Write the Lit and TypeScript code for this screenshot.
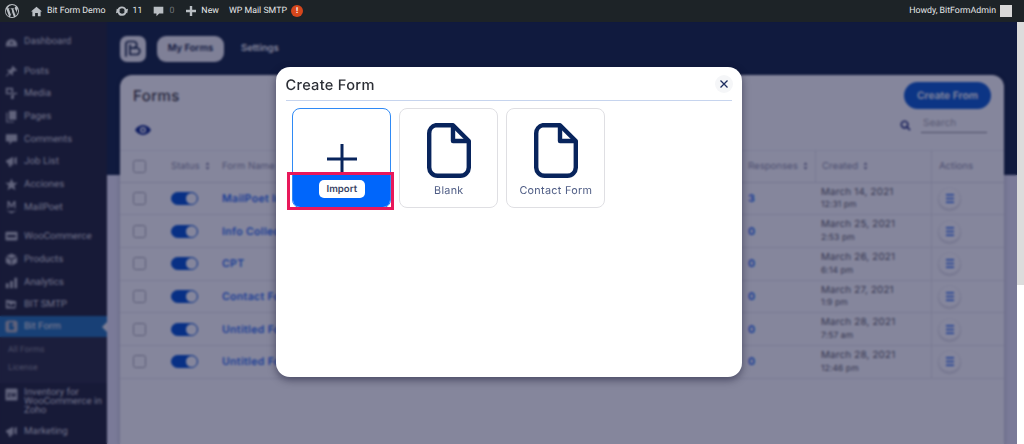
import { LitElement, html, css, svg } from 'lit';
import { customElement } from 'lit/decorators.js';

const icons: Record<string, unknown> = {
  dash: svg`<path fill-rule="evenodd" d="M1 12a7 7 0 0 1 14 0v2H1zM8 7l-1.500 4h3z"/>`,
  pin: svg`<path d="M9.500 1l5.500 5.500-1.500 1-1.500-.5-2.500 2.500.5 2.500-1 1L6 10l-4 4-1-.5 4-4.500-2.500-2.500 1-1 2.500.5L8.500 3.500 8.500 2z"/>`,
  media: svg`<path fill-rule="evenodd" d="M1 1h9v8H1zM3 3v4h5V3zM7 10h2V7h6v2h-4v4a2 2 0 1 1-2-2H7zM11 8"/>`,
  pages: svg`<path d="M5 1h9v11H5zM3 3v11h8v1.500H1.500V3z"/>`,
  comment: svg`<path d="M2 1.500h12a1 1 0 0 1 1 1v7a1 1 0 0 1-1 1H9l-3.500 4V10.500H2a1 1 0 0 1-1-1v-7a1 1 0 0 1 1-1z"/>`,
  job: svg`<path d="M1 7l9-5v11L7 11.500l1 3H5l-1-4-2-1zM11.500 4l3-2v10l-3-2z"/>`,
  star: svg`<path d="M8 .5l2.200 5.200h5.500l-4.200 3.600 1.400 5.700L8 12l-4.900 3 1.400-5.700L.3 5.700h5.500z"/>`,
  mail: svg`<path d="M3 0h2.200L8 5l2.800-5H13v9h-1.800V3.500L8.500 8h-1L4.800 3.500V9H3zM1 11.500c4 1.500 10 1.500 14 0l-6.500 3.500h-1z"/>`,
  woo: svg`<path fill-rule="evenodd" d="M2 2h12a1.500 1.500 0 0 1 1.500 1.500v8A1.500 1.500 0 0 1 14 13H2a1.500 1.500 0 0 1-1.500-1.500v-8A1.500 1.500 0 0 1 2 2zM3 6v3h10V6z"/>`,
  box: svg`<path d="M8 .5l6.500 3.200L8 7 1.500 3.700zM1 5l6.500 3.300V15.500L1 12zM15 5v7l-6.500 3.500V8.300z"/>`,
  chart: svg`<path d="M1 9h3.500v6H1zM6.200 6h3.500v9H6.200zM11.500 2H15v13h-3.500z"/>`,
  smtp: svg`<path d="M1 2l13 2-1 1.500-6 3.500L3 5v5l9 1V6l2-1-1 8H1z"/>`,
  bit: svg`<path fill-rule="evenodd" d="M4 .5h8A3.500 3.500 0 0 1 15.500 4v8a3.500 3.500 0 0 1-3.500 3.500H4A3.500 3.500 0 0 1 .5 12V4A3.500 3.500 0 0 1 4 .5zM5 3v9h6V7.500H8V6h2V3z"/>`,
  zoho: svg`<path fill-rule="evenodd" d="M2 .5h12A1.500 1.500 0 0 1 15.500 2v12a1.500 1.500 0 0 1-1.500 1.500H2A1.500 1.500 0 0 1 .5 14V2A1.500 1.500 0 0 1 2 .5zM3 6v1.200h2L3 10v1h3.500V9.800H4.500l2-2.800V6zM7.500 6l1 5h1l1-3 1 3h1l1-5h-1l-.6 3-1-3h-.8l-1 3-.6-3z"/>`,
  horn: svg`<path d="M1 7l9-5v11L7 11.500l1 3H5l-1-4-2-1zM11.500 4l3-2v10l-3-2z"/>`,
};

type MenuItem = { label: string; icon: string; cls?: string };

const menu: MenuItem[] = [
  { label: 'Dashboard', icon: 'dash', cls: 'gap' },
  { label: 'Posts', icon: 'pin' },
  { label: 'Media', icon: 'media' },
  { label: 'Pages', icon: 'pages' },
  { label: 'Comments', icon: 'comment' },
  { label: 'Job List', icon: 'job' },
  { label: 'Acciones', icon: 'star' },
  { label: 'MailPoet', icon: 'mail', cls: 'gap' },
  { label: 'WooCommerce', icon: 'woo' },
  { label: 'Products', icon: 'box' },
  { label: 'Analytics', icon: 'chart' },
  { label: 'BIT SMTP', icon: 'smtp' },
];

const rows = [
  ['MailPoet Integration', '3', 'March 14, 2021', '12:31 pm'],
  ['Info Collection', '0', 'March 25, 2021', '2:53 pm'],
  ['CPT', '0', 'March 26, 2021', '6:14 pm'],
  ['Contact Form', '0', 'March 27, 2021', '1:9 pm'],
  ['Untitled Form', '0', 'March 28, 2021', '7:57 am'],
  ['Untitled Form', '0', 'March 28, 2021', '12:46 pm'],
];

const fileIcon = html`<svg class="file" viewBox="0 0 44 55" fill="none" stroke="#08245c" stroke-width="4.400" stroke-linejoin="round">
  <path d="M9 2.200h17L41.800 18v26a8.500 8.500 0 0 1-8.500 8.800H10.700A8.500 8.500 0 0 1 2.200 44V10.700A8.500 8.500 0 0 1 9 2.200z"/>
  <path d="M26 2.200V18h15.800"/>
</svg>`;

const sort = html`<svg class="sort" viewBox="0 0 6 9"><path d="M3 0l2.400 3.400H.6zM3 9L.6 5.600h4.800z"/></svg>`;

@customElement('app-root')
export class AppRoot extends LitElement {
  static styles = css`
    :host {
      display: block;
      width: 1024px;
      height: 444px;
      overflow: hidden;
      font-family: 'Inter', 'Liberation Sans', sans-serif;
      text-rendering: geometricPrecision;
    }
    .page { position: relative; width: 1024px; height: 444px; background: #f1f1f1; display: flex; flex-direction: column; overflow: hidden; }
    .adminbar {
      position: relative; z-index: 3;
      height: 22px; flex: none; background: #1d2327; color: #e4e6e8;
      display: flex; align-items: center; padding: 0 12px 0 5px;
      font: 8.800px Roboto, 'Liberation Sans', sans-serif;
    }
    .adminbar svg { fill: #b9bec3; display: block; }
    .ab { display: flex; align-items: center; gap: 5px; }
    .ab.site { margin-left: 12px; }
    .ab.upd { margin-left: 10px; }
    .ab.com { margin-left: 11px; }
    .ab.new { margin-left: 12px; }
    .ab.smtp { margin-left: 10px; gap: 4px; }
    .muted { color: #6d7276; }
    .badge { width: 12px; height: 12px; border-radius: 50%; background: #d5461c; color: #fff; font-size: 8px; font-weight: 700; text-align: center; line-height: 12px; }
    .spacer { flex: 1; }
    .avatar { width: 12px; height: 12px; background: #d8d8d8; margin-left: 4px; }

    .body { flex: 1; display: flex; min-height: 0; }
    .sidebar { width: 107px; flex: none; background: #1f2332; padding-top: 8px; font: 9.800px Roboto, 'Liberation Sans', sans-serif; color: #d0d1d6; }
    .mi { height: 22.700px; display: flex; align-items: center; padding-left: 5px; gap: 6px; }
    .mi svg { width: 13px; height: 13px; fill: #b4b6bc; flex: none; }
    .mi.gap { margin-bottom: 7px; }
    .mi.active { background: #2271b1; color: #e8e8e8; position: relative; height: 21px; }
    .mi.active::after {
      content: ''; position: absolute; right: 0; top: 6px;
      border: 5px solid transparent; border-right-color: #f1f1f1; border-left: 0;
    }
    .sub { height: 46px; box-sizing: border-box; background: #282b3c; padding: 4px 0 0 8px; font-size: 8.600px; color: #8c8f94; }
    .sub div { height: 18px; display: flex; align-items: center; }
    .mi.tall { height: 36.500px; box-sizing: border-box; align-items: flex-start; padding-top: 5px; line-height: 9px; }

    .content {
      flex: 1; min-width: 0; padding: 0 13px;
      background: linear-gradient(#11233f 153px, #e8e7f6 153px);
    }
    .nav { height: 53px; display: flex; align-items: center; }
    .logo { width: 26px; height: 26px; background: #f2f2f4; border-radius: 7px; display: flex; align-items: center; justify-content: center; margin-top: 1px; }
    .logo svg { width: 18px; height: 18px; }
    .tab { font-weight: 600; font-size: 9.500px; color: #fff; }
    .tab.on { margin-left: 11px; width: 67px; height: 26px; border-radius: 9px; background: #f2f2f4; color: #11233f; display: flex; align-items: center; justify-content: center; }
    .tab.off { margin-left: 17px; }

    .card { background: #fff; border-radius: 12px 12px 0 0; height: 369px; box-shadow: 0 0 4px rgba(0,0,20,.25); }
    .top { height: 75px; display: flex; position: relative; padding: 0 13px; }
    .title { font-size: 15px; font-weight: 500; color: #3a3a3a; padding-top: 11px; letter-spacing: .4px; }
    .eye { position: absolute; left: 15px; top: 49px; width: 16px; height: 12px; }
    .create { width: 87px; height: 27px; margin: 7px 0 0 auto; border-radius: 14px; background: #0a5ad0; color: #fff; font-size: 10.300px; font-weight: 600; display: flex; align-items: center; justify-content: center; box-sizing: border-box; }
    .search { position: absolute; right: 17px; top: 42px; display: flex; align-items: center; gap: 10px; font-size: 10px; color: #a8a8ae; }
    .search svg { width: 11px; height: 11px; }
    .search span { width: 66px; height: 16px; box-sizing: border-box; padding: 0 0 0 2px; border-bottom: 1px solid #8a8a92; line-height: 13px; }

    .grid { display: grid; grid-template-columns: 41px 55px 526px 73px 116px 73px; }
    .hd, .cell { display: flex; align-items: center; box-sizing: border-box; }
    .hd { height: 32.600px; font-size: 9.600px; color: #8f92a8; border-top: 1px solid #eceef2; border-bottom: 1px solid #e0e1e8; gap: 5px; }
    .cell { height: 32.700px; border-bottom: 1px solid #e8e8ee; }
    .pad { padding-left: 6px; }
    .pad10 { padding-left: 10px; }
    .pad7 { padding-left: 7px; }
    .sort { width: 5px; height: 8px; fill: #7e81a0; }
    .sep { border-left: 1px solid #e4e4ea; }
    .check { width: 13px; height: 13px; border: 1px solid #a9a9b2; border-radius: 2.500px; margin-left: 13px; box-sizing: border-box; }
    .toggle { width: 27px; height: 13px; border-radius: 7px; background: #0050d0; position: relative; border: 1px solid #0050d0; box-sizing: border-box; }
    .toggle::after { content: ''; position: absolute; right: 0; top: 0; width: 11px; height: 11px; border-radius: 50%; background: #fff; }
    .name { font-size: 10.500px; font-weight: 600; color: #2a6cf0; white-space: nowrap; letter-spacing: .35px; }
    .num { font-size: 10.500px; font-weight: 700; color: #2a6cf0; }
    .date { display: flex; flex-direction: column; gap: 4.500px; color: #5e5e66; font-size: 9.800px; line-height: 9px; letter-spacing: .2px; }
    .date small { font-size: 8.500px; line-height: 8px; letter-spacing: .1px; }
    .act { width: 21px; height: 21px; border-radius: 50%; background: #fff; box-shadow: 0 1px 3px rgba(0,0,50,.25); display: flex; align-items: center; justify-content: center; margin-left: 7px; }
    .act svg { width: 8px; height: 9px; fill: #2a6cf0; }

    .overlay {
      position: absolute; top: 22px; left: 0; right: 7px; bottom: 0; z-index: 2;
      background: rgba(16, 18, 60, .51);
      backdrop-filter: blur(1.200px);
      display: flex; justify-content: center; padding-top: 45px; box-sizing: border-box;
    }
    .modal {
      width: 466px; height: 310px; background: #fff; border-radius: 14px;
      box-shadow: 0 3px 8px rgba(0,0,30,.45); padding: 0 10px 0 10px; box-sizing: border-box;
    }
    .mhead { height: 33px; display: flex; align-items: center; justify-content: space-between; border-bottom: 1px solid #c6d4ee; }
    .mtitle { font-size: 14.600px; font-weight: 500; color: #2c2f36; letter-spacing: .28px; padding-top: 2px; }
    .close { width: 18px; height: 18px; background: #f5f6f8; border-radius: 50%; display: flex; align-items: center; justify-content: center; margin-right: -1px; }
    .close svg { width: 8px; height: 8px; stroke: #1c2c5e; stroke-width: 1.300; fill: none; }
    .opts { display: flex; gap: 8px; padding: 6.500px 0 0 6.800px; }
    .opt {
      width: 99px; height: 100px; border: 1px solid #dfdfe3; border-radius: 8px; box-sizing: border-box;
      display: flex; flex-direction: column; align-items: center; padding-top: 14px; position: relative;
      font-size: 10.800px; color: #4f5d85; letter-spacing: .3px;
    }
    .opt.sel { border-color: #2f8af5; }
    .file { width: 44px; height: 55px; display: block; margin-bottom: 6px; }
    .plus { width: 30px; height: 30px; margin-top: 21px; display: block; }
    .band {
      position: absolute; left: 0; right: 0; bottom: 0; height: 35px; background: #0066fb;
      border-radius: 0 0 7px 7px; display: flex; align-items: center; justify-content: center;
    }
    .imp { width: 46px; height: 18px; background: #fff; border-radius: 5px; color: #3a4464; font-size: 9.600px; font-weight: 600; display: flex; align-items: center; justify-content: center; letter-spacing: 0; }
    .mark { position: absolute; left: -6px; right: -3.500px; bottom: -3.500px; height: 38.300px; box-sizing: border-box; border: 3px solid #e8185a; }

    .scroll { width: 7px; flex: none; background: #dcdcdc; height: 263px; }
    .scrollwrap { width: 7px; flex: none; background: #fff; }
  `;

  private icon(name: string) {
    return html`<svg viewBox="0 0 16 16">${icons[name]}</svg>`;
  }

  render() {
    return html`<div class="page">
      <div class="adminbar">
        <svg width="14" height="14" viewBox="0 0 20 20"><path fill-rule="evenodd" d="M10 0a10 10 0 1 0 0 20 10 10 0 0 0 0-20zm0 1.400a8.600 8.600 0 0 1 5.900 2.300c-1.200 0-2 1-2 2.100 0 1 .6 1.800 1.200 2.800.5.8 1 1.900 1 3.400l-1.300 4.200-3-9.400.9-.1c.5 0 .4-.8-.1-.7 0 0-1.300.1-2.200.1-.8 0-2.100-.1-2.100-.1-.5 0-.6.700-.1.700l.8.1 1.300 3.500-1.800 5.400-3-8.900.9-.1c.5 0 .4-.8-.1-.7 0 0-1.300.1-2.200.1h-.5A8.600 8.600 0 0 1 10 1.400zM1.900 7.100L5.800 18A8.600 8.600 0 0 1 1.900 7.100zM10 11l2.600 7.200a8.600 8.600 0 0 1-5.300.1zm7.600-5.100a8.600 8.600 0 0 1-3 11.400l2.600-7.600c.5-1.200.6-2.100.6-3z"/></svg>
        <div class="ab site">
          <svg width="11" height="11" viewBox="0 0 16 16"><path d="M8 1l8 7h-2v7h-4v-5H6v5H2V8H0z"/></svg>
          <span>Bit Form Demo</span>
        </div>
        <div class="ab upd">
          <svg width="12" height="12" viewBox="0 0 16 16"><path d="M8 2a6 6 0 0 1 5.600 3.800L16 5l-1 6-5-3 1.800-.8A4 4 0 0 0 4.200 7H1.900A6 6 0 0 1 8 2zM0 11l1-6 5 3-1.800.8A4 4 0 0 0 11.800 9h2.300A6 6 0 0 1 2.400 10.200z"/></svg>
          <span>11</span>
        </div>
        <div class="ab com">
          <svg width="11" height="11" viewBox="0 0 16 16"><path d="M1 1h14v10H9l-4 4v-4H1z"/></svg>
          <span class="muted">0</span>
        </div>
        <div class="ab new">
          <svg width="10" height="10" viewBox="0 0 10 10"><path d="M3.800 0h2.400v3.800H10v2.400H6.200V10H3.800V6.200H0V3.800h3.800z"/></svg>
          <span>New</span>
        </div>
        <div class="ab smtp"><span>WP Mail SMTP</span><span class="badge">!</span></div>
        <div class="spacer"></div>
        <span>Howdy, BitFormAdmin</span>
        <div class="avatar"></div>
      </div>

      <div class="body">
        <div class="sidebar">
          ${menu.map(
            (m) => html`<div class="mi ${m.cls ?? ''}">${this.icon(m.icon)}<span>${m.label}</span></div>`,
          )}
          <div class="mi active">${this.icon('bit')}<span>Bit Form</span></div>
          <div class="sub"><div>All Forms</div><div>License</div></div>
          <div class="mi tall">${this.icon('zoho')}<span>Inventory for WooCommerce in Zoho</span></div>
          <div class="mi">${this.icon('horn')}<span>Marketing</span></div>
        </div>

        <div class="content">
          <div class="nav">
            <div class="logo">
              <svg viewBox="0 0 18 18" fill="none" stroke="#11233f" stroke-width="1.700" stroke-linecap="round" stroke-linejoin="round">
                <path d="M2 16V4a2.500 2.500 0 0 1 2.500-2.500h5a3 3 0 0 1 0 6.500H6"/>
                <path d="M6 5v9.500h6.500a3.200 3.200 0 0 0 0-6.500H9"/>
              </svg>
            </div>
            <div class="tab on">My Forms</div>
            <div class="tab off">Settings</div>
          </div>
          <div class="card">
            <div class="top">
              <div class="title">Forms</div>
              <svg class="eye" viewBox="0 0 16 12" fill="#0e2a8a"><path fill-rule="evenodd" d="M8 1c3.500 0 6.500 2.200 8 5-1.500 2.800-4.500 5-8 5S1.500 8.800 0 6c1.500-2.800 4.500-5 8-5zm0 2a3 3 0 1 0 0 6 3 3 0 0 0 0-6zm0 1.500a1.500 1.500 0 1 1 0 3 1.500 1.500 0 0 1 0-3z"/></svg>
              <div class="create">Create From</div>
              <div class="search">
                <svg viewBox="0 0 12 12" fill="none" stroke="#24317c" stroke-width="1.800"><circle cx="5" cy="5" r="3.600"/><path d="M7.800 7.800L11 11"/></svg>
                <span>Search</span>
              </div>
            </div>
            <div class="grid">
              <div class="hd"><div class="check"></div></div>
              <div class="hd pad10">Status ${sort}</div>
              <div class="hd pad">Form Name ${sort}</div>
              <div class="hd pad">Responses ${sort}</div>
              <div class="hd pad sep">Created ${sort}</div>
              <div class="hd sep pad7">Actions</div>
              ${rows.map(
                (r) => html`
                  <div class="cell"><div class="check"></div></div>
                  <div class="cell pad10"><div class="toggle"></div></div>
                  <div class="cell pad"><span class="name">${r[0]}</span></div>
                  <div class="cell pad"><span class="num">${r[1]}</span></div>
                  <div class="cell pad"><div class="date">${r[2]}<small>${r[3]}</small></div></div>
                  <div class="cell sep">
                    <div class="act"><svg viewBox="0 0 8 9"><path d="M0 0h8v1.500H0zM0 3.700h8v1.500H0zM0 7.400h8v1.500H0z"/></svg></div>
                  </div>
                `,
              )}
            </div>
          </div>
        </div>
        <div class="scrollwrap"><div class="scroll"></div></div>
      </div>

      <div class="overlay">
        <div class="modal">
          <div class="mhead">
            <div class="mtitle">Create Form</div>
            <div class="close"><svg viewBox="0 0 8 8"><path d="M.5.5l7 7M7.500.5l-7 7"/></svg></div>
          </div>
          <div class="opts">
            <div class="opt sel">
              <svg class="plus" viewBox="0 0 30 30" stroke="#08245c" stroke-width="3"><path d="M15 0v30M0 15h30"/></svg>
              <div class="band"><div class="imp">Import</div></div>
              <div class="mark"></div>
            </div>
            <div class="opt">${fileIcon}<span>Blank</span></div>
            <div class="opt">${fileIcon}<span>Contact Form</span></div>
          </div>
        </div>
      </div>
    </div>`;
  }
}
